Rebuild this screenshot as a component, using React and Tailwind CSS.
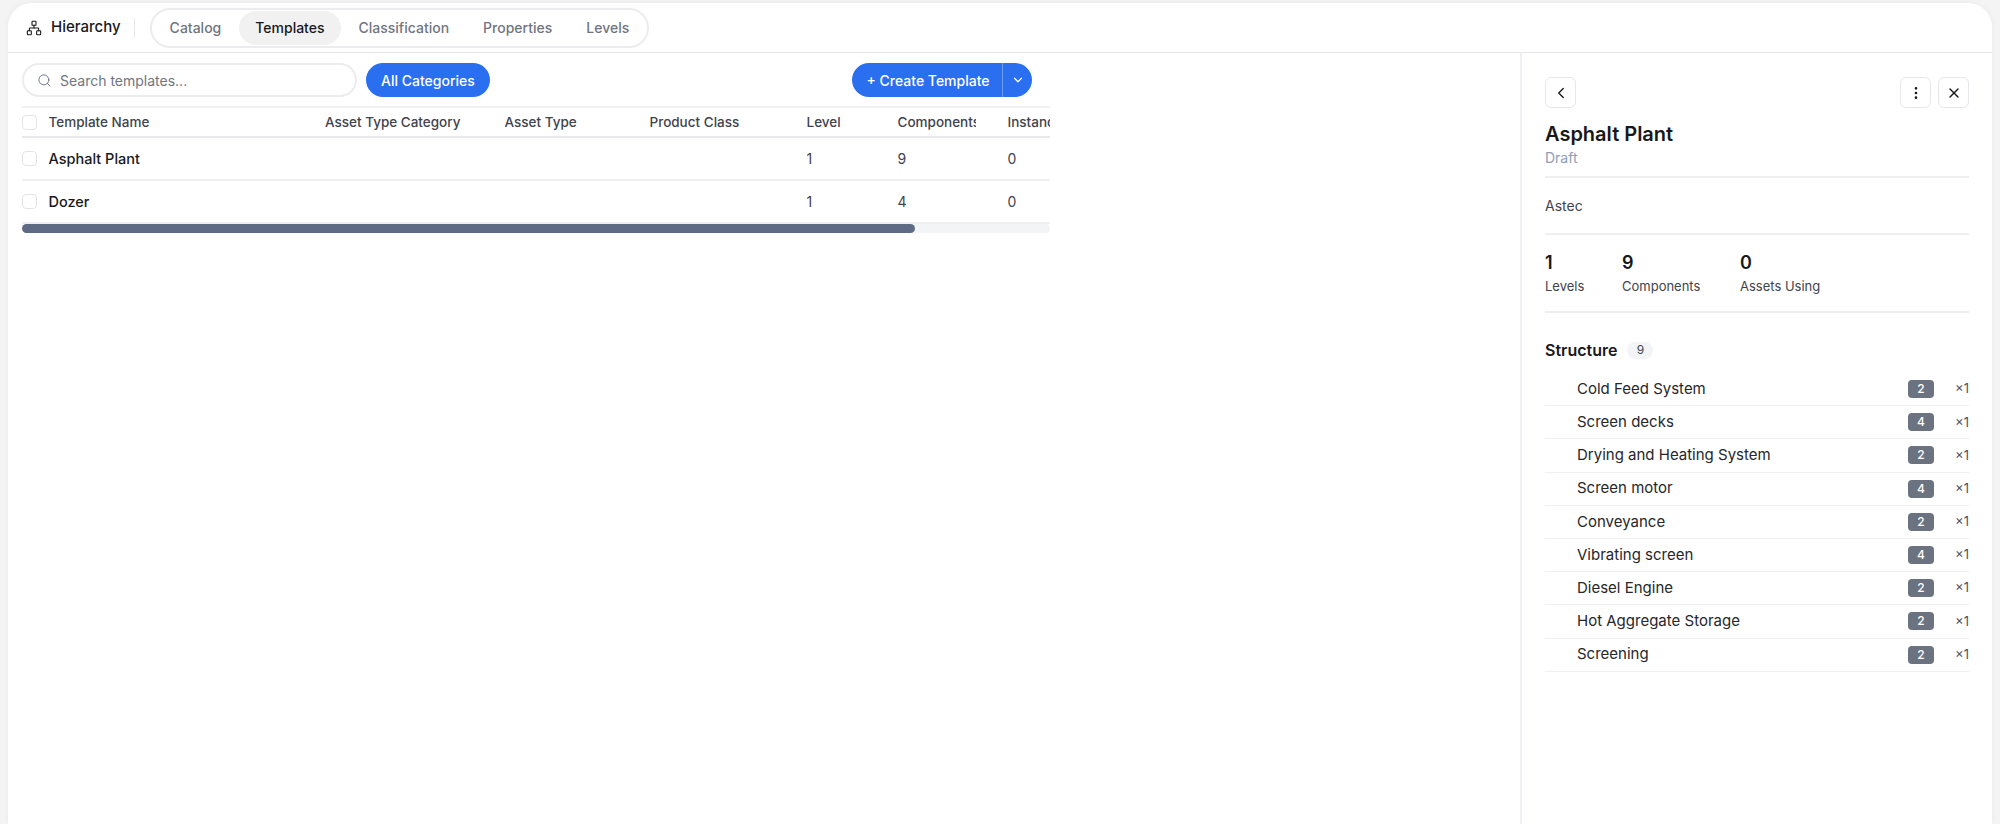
import React from "react";
import { ChevronDown, ChevronLeft, EllipsisVertical, Network, Search, X } from "lucide-react";

const tabs = ["Catalog", "Templates", "Classification", "Properties", "Levels"];
const columns = "grid grid-cols-[26.5px_276.5px_179.5px_145px_157px_91px_110px_43px]";

const templates = [
  { name: "Asphalt Plant", level: 1, components: 9, instances: 0 },
  { name: "Dozer", level: 1, components: 4, instances: 0 },
];

const structure = [
  ["Cold Feed System", 2],
  ["Screen decks", 4],
  ["Drying and Heating System", 2],
  ["Screen motor", 4],
  ["Conveyance", 2],
  ["Vibrating screen", 4],
  ["Diesel Engine", 2],
  ["Hot Aggregate Storage", 2],
  ["Screening", 2],
];

const stats = [
  { value: 1, label: "Levels", width: "w-[77px]" },
  { value: 9, label: "Components", width: "w-[118px]" },
  { value: 0, label: "Assets Using", width: "" },
];

function Checkbox() {
  return <div className="w-[15px] h-[15px] rounded-[4px] border border-[#e2e4e8] bg-white" />;
}

function IconButton({ children }) {
  return (
    <button className="w-[31px] h-[31px] flex items-center justify-center rounded-md border border-[#e5e7eb] bg-white text-[#18181b]">
      {children}
    </button>
  );
}

export default function App() {
  return (
    <div className="h-[824px] overflow-hidden bg-[#f4f4f5] px-2 pt-[3px] font-['Inter',sans-serif] text-[14px] text-[#18181b]">
      <div className="h-full flex flex-col rounded-t-[24px] bg-white shadow-[0_0_6px_rgba(0,0,0,0.05)]">
        {/* Top bar */}
        <div className="h-[50px] shrink-0 flex items-center border-b border-[#e5e7eb] pl-[18px]">
          <Network size={16} strokeWidth={1.6} className="text-[#18181b]" />
          <span className="ml-[9px] text-[15px] font-medium">Hierarchy</span>
          <div className="ml-[13px] mr-[15px] h-[20px] w-px bg-[#e5e7eb]" />
          <div className="h-[40px] flex items-center gap-[2px] rounded-full border-2 border-[#ececee] px-[2px]">
            {tabs.map((tab) => (
              <div
                key={tab}
                className={
                  tab === "Templates"
                    ? "h-[34px] flex items-center px-4 rounded-full bg-[#f1f1f2] text-[14px] font-medium text-[#18181b]"
                    : "h-[34px] flex items-center px-4 rounded-full text-[14px] font-medium text-[#71757e]"
                }
              >
                {tab}
              </div>
            ))}
          </div>
        </div>

        <div className="flex-1 flex min-h-0">
          {/* Templates table */}
          <div className="flex-1 pl-[14px]">
            <div className="w-[1028px]">
              <div className="h-[53px] flex items-center pt-[1px] pr-[18px]">
                <div className="w-[335px] h-[34px] flex items-center gap-2 rounded-full border-2 border-[#ececee] pl-[13px]">
                  <Search size={15} strokeWidth={1.5} className="text-[#6b7280]" />
                  <span className="text-[14px] text-[#71757e]">Search templates...</span>
                </div>
                <button className="ml-[9px] h-[34px] px-[15px] rounded-full bg-[#2a6ff0] text-[14px] font-medium text-white">
                  All Categories
                </button>
                <div className="ml-auto h-[34px] flex items-center rounded-full bg-[#2a6ff0] text-white">
                  <button className="h-full w-[151px] pl-[2px] border-r border-[#6d9cf5] text-[14px] font-medium">+ Create Template</button>
                  <ChevronDown size={14} strokeWidth={2.2} className="mx-[7.5px]" />
                </div>
              </div>

              <div className="overflow-hidden">
                <div className={`${columns} h-[32px] items-center border-y-2 border-t-[#f1f1f2] border-b-[#e9e9eb] box-content-none text-[13.5px] font-medium text-[#3f434c]`}>
                  <Checkbox />
                  <div>Template Name</div>
                  <div>Asset Type Category</div>
                  <div>Asset Type</div>
                  <div>Product Class</div>
                  <div>Level</div>
                  <div className="w-[78px] overflow-hidden whitespace-nowrap">Components</div>
                  <div className="overflow-hidden whitespace-nowrap">Instances</div>
                </div>
                {templates.map((row) => (
                  <div key={row.name} className={`${columns} h-[43px] items-center border-b-2 border-[#efeff0] last:border-b-0`}>
                    <Checkbox />
                    <div className="font-medium text-[14.5px]">{row.name}</div>
                    <div />
                    <div />
                    <div />
                    <div className="text-[#3f434c]">{row.level}</div>
                    <div className="text-[#3f434c]">{row.components}</div>
                    <div className="text-[#3f434c]">{row.instances}</div>
                  </div>
                ))}
                <div className="h-[9px] rounded-full bg-[#f3f4f6]">
                  <div className="h-full w-[893px] rounded-full bg-[#5f6b85]" />
                </div>
              </div>
            </div>
          </div>

          {/* Detail panel */}
          <div className="w-[472px] shrink-0 border-l-2 border-[#eef0f3] pl-[23px] pr-[23px] pt-[24px]">
            <div className="flex items-center">
              <IconButton><ChevronLeft size={18} strokeWidth={1.8} /></IconButton>
              <div className="ml-auto flex gap-[7px]">
                <IconButton><EllipsisVertical size={16} strokeWidth={2} /></IconButton>
                <IconButton><X size={16} strokeWidth={2} /></IconButton>
              </div>
            </div>
            <h1 className="mt-[12px] text-[20px] leading-[28px] font-semibold">Asphalt Plant</h1>
            <div className="h-[20px] text-[14px] leading-[20px] text-[#8e9dbb]">Draft</div>
            <div className="h-[59px] mt-[8px] flex items-center border-y-2 border-t-[#efeff0] border-b-[#efeff0] text-[14px] text-[#3f434c]">Astec</div>
            <div className="h-[78px] flex items-center border-b-2 border-[#efeff0]">
              {stats.map((stat) => (
                <div key={stat.label} className={stat.width}>
                  <div className="text-[18px] leading-[26px] font-semibold">{stat.value}</div>
                  <div className="text-[13px] leading-[20px] text-[#3f434c]">{stat.label}</div>
                </div>
              ))}
            </div>
            <div className="mt-[27px] flex items-center">
              <span className="text-[16px] leading-[20px] font-semibold">Structure</span>
              <span className="ml-[10px] h-[17px] w-[26px] flex items-center justify-center rounded-full bg-[#f3f4f6] text-[12px] text-[#3f434c]">9</span>
            </div>
            <div className="mt-[13px]">
              {structure.map(([name, count]) => (
                <div key={name} className="h-[33.2px] flex items-center border-b border-[#f0f0f1] pl-[32px]">
                  <span className="text-[15px] text-[#27272a]">{name}</span>
                  <span className="ml-auto h-[18px] w-[26px] flex items-center justify-center rounded-[4px] bg-[#6b7280] text-[12px] font-medium text-white">{count}</span>
                  <span className="ml-[21px] w-[14px] text-[13px] text-[#52525b] text-right">×1</span>
                </div>
              ))}
            </div>
          </div>
        </div>
      </div>
    </div>
  );
}
